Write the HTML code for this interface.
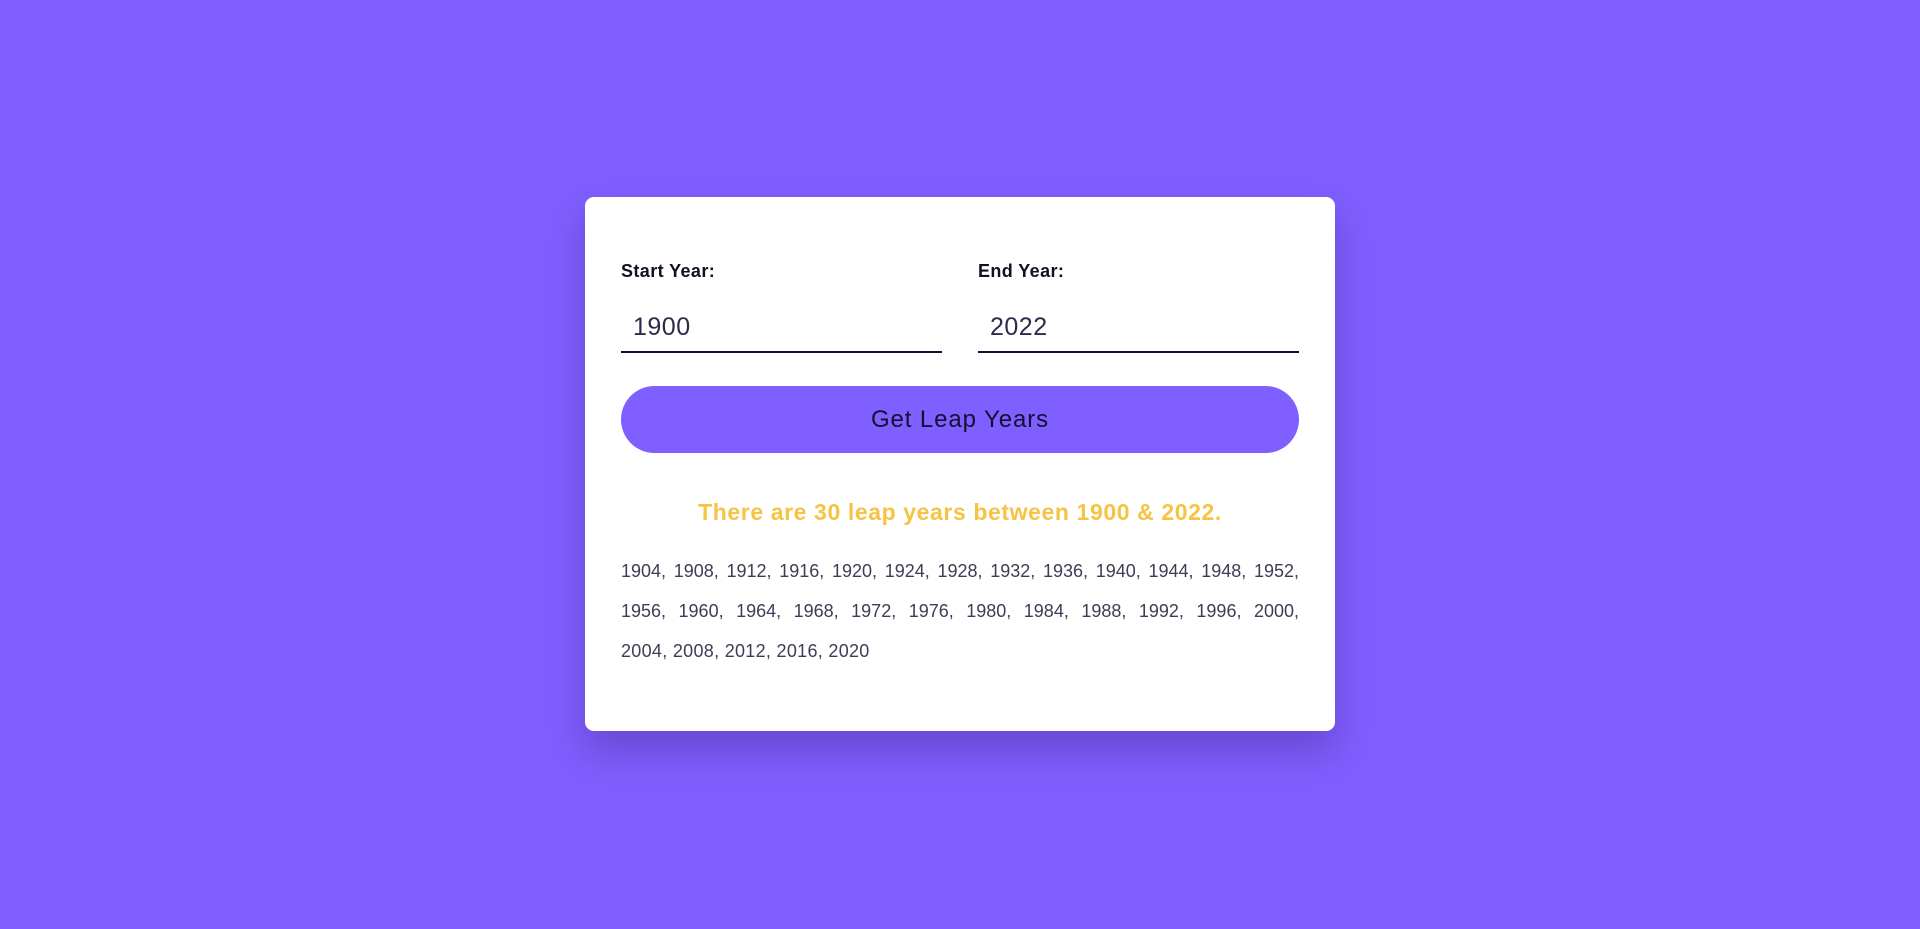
<!DOCTYPE html>
<html><head><meta charset="utf-8"><style>
html,body{margin:0;padding:0;width:1920px;height:929px;background:#7f5fff;font-family:"Liberation Sans",sans-serif;overflow:hidden}
.card{position:absolute;left:585px;top:197px;width:750px;height:534px;background:#fff;border-radius:9px;box-shadow:0 20px 40px rgba(60,30,120,0.35)}
.lbl{position:absolute;top:261px;font-size:18px;font-weight:bold;color:#111122;letter-spacing:0.4px}
.inp{position:absolute;top:309px;width:321px;height:44px;border-bottom:2px solid #141033;font-size:25px;color:#2c2c4a;box-sizing:border-box;padding-left:12px;line-height:36px;letter-spacing:0.5px}
.btn{position:absolute;left:621px;top:386px;width:678px;height:67px;border-radius:34px;background:#7f5fff;color:#111133;font-size:24px;text-align:center;line-height:67px;letter-spacing:0.9px}
.res{position:absolute;left:621px;width:678px;top:499px;text-align:center;color:#f6c343;font-weight:bold;font-size:23px;letter-spacing:0.6px}
.yrs{position:absolute;left:621px;width:678px;font-size:18px;line-height:40px;color:#3d3d55;white-space:nowrap}
.j{text-align:justify;text-align-last:justify;white-space:normal}
</style></head><body>
<div class="card"></div>
<div class="lbl" style="left:621px">Start Year:</div>
<div class="lbl" style="left:978px">End Year:</div>
<div class="inp" style="left:621px">1900</div>
<div class="inp" style="left:978px">2022</div>
<div class="btn">Get Leap Years</div>
<div class="res">There are 30 leap years between 1900 &amp; 2022.</div>
<div class="yrs j" style="top:551px">1904, 1908, 1912, 1916, 1920, 1924, 1928, 1932, 1936, 1940, 1944, 1948, 1952,</div>
<div class="yrs j" style="top:591px">1956, 1960, 1964, 1968, 1972, 1976, 1980, 1984, 1988, 1992, 1996, 2000,</div>
<div class="yrs" style="top:631px;letter-spacing:0.3px">2004, 2008, 2012, 2016, 2020</div>
</body></html>
